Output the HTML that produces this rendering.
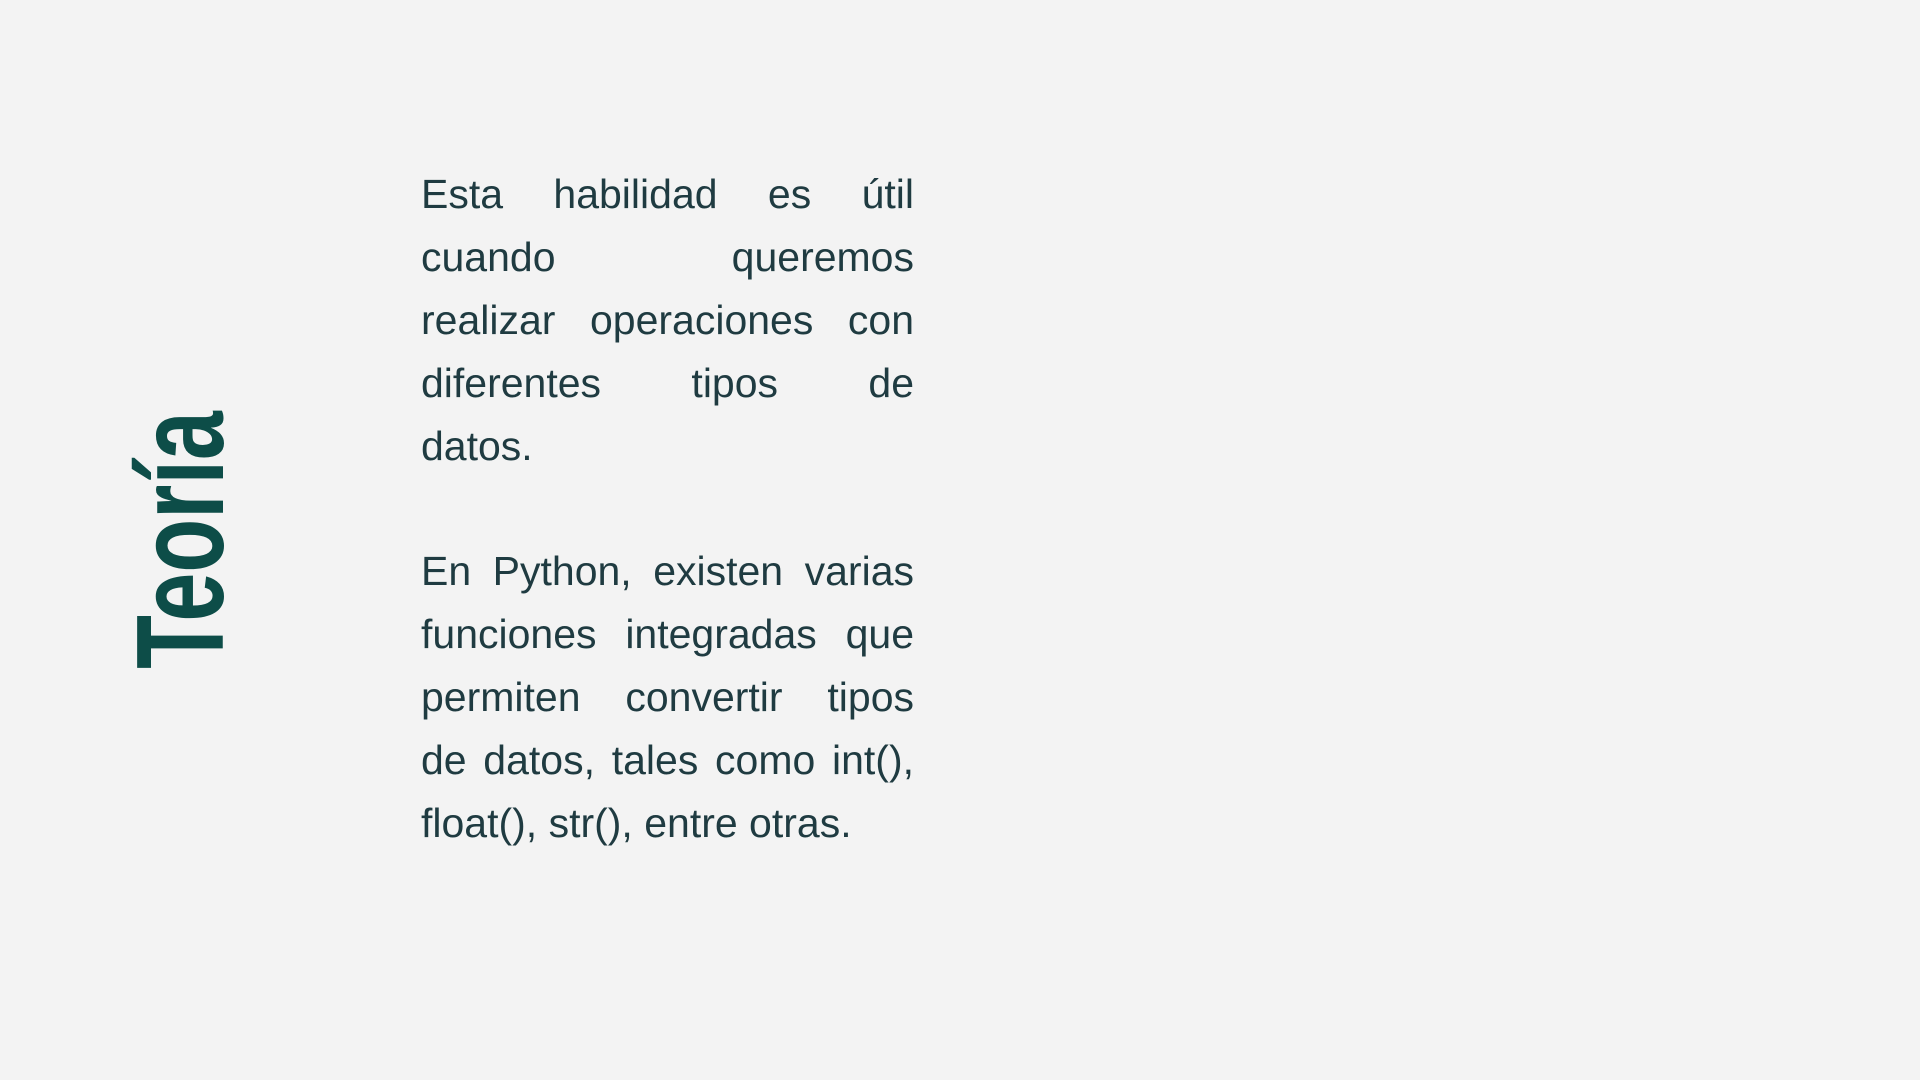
<!DOCTYPE html>
<html><head><meta charset="utf-8"><style>
html,body{margin:0;padding:0;width:1920px;height:1080px;background:#f3f3f3;overflow:hidden}
.t{position:absolute;left:421px;width:493px;font-family:"Liberation Sans",sans-serif;font-size:41px;color:#1f3b41;line-height:63px}
.t div{text-align:justify;text-align-last:justify;white-space:nowrap;height:63px}
.t div.l{text-align-last:left}
.title{position:absolute;left:181px;top:540px;transform:translate(-50%,-50%) rotate(-90deg) scaleX(0.71);font-family:"Liberation Sans",sans-serif;font-weight:bold;font-size:124px;color:#0d4d48;white-space:nowrap;line-height:1}
</style></head><body>
<div class="title">Teoría</div>
<div class="t" style="top:163px">
<div>Esta habilidad es útil</div>
<div>cuando queremos</div>
<div>realizar operaciones con</div>
<div>diferentes tipos de</div>
<div class="l">datos.</div>
</div>
<div class="t" style="top:540px">
<div>En Python, existen varias</div>
<div>funciones integradas que</div>
<div>permiten convertir tipos</div>
<div>de datos, tales como int(),</div>
<div class="l">float(), str(), entre otras.</div>
</div>
</body></html>
